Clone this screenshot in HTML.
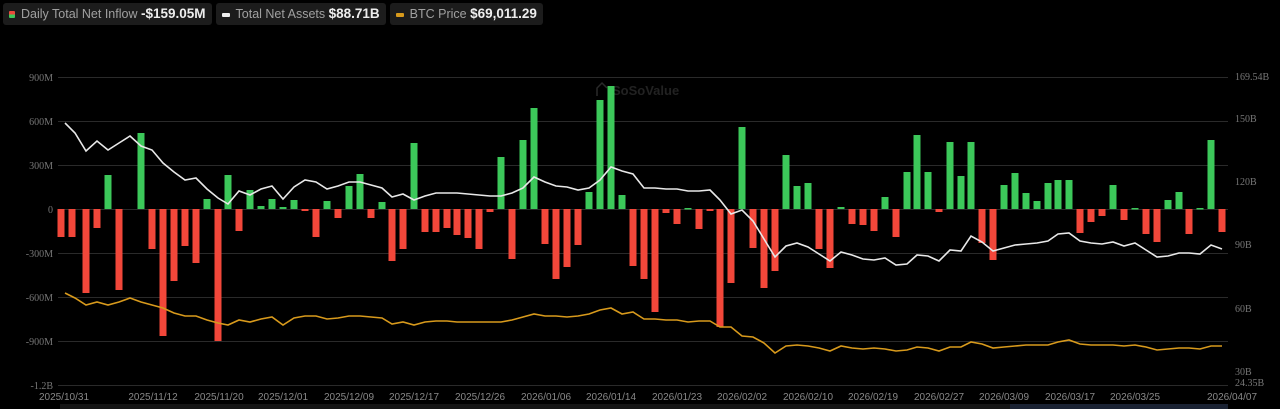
<!DOCTYPE html>
<html><head><meta charset="utf-8"><style>
html,body{margin:0;padding:0;background:#000;width:1280px;height:409px;overflow:hidden;font-family:"Liberation Sans",sans-serif}
#lg{position:absolute;top:3px;left:3px;display:flex;gap:4px;z-index:2}
.leg{height:22px;background:#1c1c1c;border-radius:3px;color:#a0a0a0;font-size:12.5px;line-height:22px;padding:0 6px;white-space:nowrap}
.leg b{color:#eee;font-size:13.5px}
.sw{display:inline-block;width:8px;height:4px;vertical-align:middle;margin-right:6px;border-radius:1px}
svg{position:absolute;left:0;top:0}
</style></head><body>
<div id="lg">
<div class="leg"><span class="sw" style="height:7px;width:6px;background:linear-gradient(#e94a3a 50%,#3cc85a 50%)"></span>Daily Total Net Inflow <b>-$159.05M</b></div>
<div class="leg"><span class="sw" style="background:#eee"></span>Total Net Assets <b>$88.71B</b></div>
<div class="leg"><span class="sw" style="background:#d89a1c"></span>BTC Price <b>$69,011.29</b></div>
</div>
<svg id="s" width="1280" height="409" xmlns="http://www.w3.org/2000/svg" font-family="Liberation Serif, serif" font-size="10" fill="#777">
<g stroke="#2a2a2a" stroke-width="1">
<line x1="58" x2="1228" y1="77.5" y2="77.5"/><line x1="58" x2="1228" y1="121.5" y2="121.5"/><line x1="58" x2="1228" y1="165.5" y2="165.5"/><line x1="58" x2="1228" y1="209.5" y2="209.5"/><line x1="58" x2="1228" y1="253.5" y2="253.5"/><line x1="58" x2="1228" y1="297.5" y2="297.5"/><line x1="58" x2="1228" y1="341.5" y2="341.5"/><line x1="58" x2="1228" y1="385.5" y2="385.5"/>
</g>
<g text-anchor="end"><text x="53" y="81">900M</text><text x="53" y="125">600M</text><text x="53" y="169">300M</text><text x="53" y="213">0</text><text x="53" y="257">-300M</text><text x="53" y="301">-600M</text><text x="53" y="345">-900M</text><text x="53" y="389">-1.2B</text></g>
<g><text x="1235" y="80">169.54B</text><text x="1235" y="122">150B</text><text x="1235" y="185">120B</text><text x="1235" y="248">90B</text><text x="1235" y="312">60B</text><text x="1235" y="375">30B</text><text x="1235" y="386">24.35B</text></g>
<g font-family="Liberation Sans, sans-serif" font-size="10" fill="#888" text-anchor="middle">
<text x="64" y="400">2025/10/31</text><text x="153" y="400">2025/11/12</text><text x="219" y="400">2025/11/20</text><text x="283" y="400">2025/12/01</text><text x="349" y="400">2025/12/09</text><text x="414" y="400">2025/12/17</text><text x="480" y="400">2025/12/26</text><text x="546" y="400">2026/01/06</text><text x="611" y="400">2026/01/14</text><text x="677" y="400">2026/01/23</text><text x="742" y="400">2026/02/02</text><text x="808" y="400">2026/02/10</text><text x="873" y="400">2026/02/19</text><text x="939" y="400">2026/02/27</text><text x="1004" y="400">2026/03/09</text><text x="1070" y="400">2026/03/17</text><text x="1135" y="400">2026/03/25</text><text x="1232" y="400">2026/04/07</text>
</g>
<rect x="60" y="404" width="1168" height="5" fill="#141414"/><rect x="1010" y="404" width="218" height="5" fill="#1a2233"/>
<g opacity="0.5"><path d="M597 96 v-8 l5 -5 l5 5" stroke="#555" fill="none" stroke-width="1.5"/><text x="612" y="95" font-family="Liberation Sans, sans-serif" font-size="13" font-weight="bold" fill="#444">SoSoValue</text></g>
<g id="bars"></g>
<polyline id="wl" fill="none" stroke="#e8e8e8" stroke-width="1.6"/>
<polyline id="ol" fill="none" stroke="#d89a1c" stroke-width="1.6"/>
</svg>
<script>
var B=[[61,237],[72,237],[86,293],[97,228],[108,175],[119,290],[141,133],[152,249],[163,336],[174,281],[185,246],[196,263],[207,199],[218,341],[228,175],[239,231],[250,190],[261,206],[272,199],[283,207],[294,200],[305,211],[316,237],[327,201],[338,218],[349,186],[360,174],[371,218],[382,202],[392,261],[403,249],[414,143],[425,232],[436,232],[447,228],[457,235],[468,238],[479,249],[490,212],[501,157],[512,259],[523,140],[534,108],[545,244],[556,279],[567,267],[578,245],[589,192],[600,100],[611,86],[622,195],[633,266],[644,279],[655,312],[666,213],[677,224],[688,208],[699,229],[710,211],[720,327],[731,283],[742,127],[753,248],[764,288],[775,271],[786,155],[797,186],[808,183],[819,249],[830,268],[841,207],[852,224],[863,225],[874,231],[885,197],[896,237],[907,172],[917,135],[928,172],[939,212],[950,142],[961,176],[971,142],[982,243],[993,260],[1004,185],[1015,173],[1026,193],[1037,201],[1048,183],[1058,180],[1069,180],[1080,233],[1091,222],[1102,216],[1113,185],[1124,220],[1135,208],[1146,234],[1157,242],[1168,200],[1179,192],[1189,234],[1200,208],[1211,140],[1222,232]];
var g=document.getElementById('bars'),h='';
B.forEach(function(b){var y0=209,y=b[1];var top=Math.min(y0,y),ht=Math.max(1.5,Math.abs(y-y0));h+='<rect x="'+(b[0]-3.5)+'" y="'+top+'" width="7" height="'+ht+'" fill="'+(y<y0?'#3cc85a':'#f2473a')+'"/>';});
g.innerHTML=h;
var W="65,123 75,133 86,151 97,141 108,150 119,143 130,136 141,146 152,150 163,163 174,172 185,180 196,178 207,189 218,198 228,204 239,191 250,195 261,189 272,186 283,199 294,187 305,180 316,182 327,189 338,186 349,182 360,182 371,185 382,188 392,197 403,194 414,200 425,196 436,193 447,193 457,193 468,194 479,195 490,196 501,196 512,193 523,188 534,177 545,182 556,186 567,187 578,190 589,188 600,180 611,167 622,171 633,174 644,188 655,188 666,189 677,189 688,191 699,191 710,190 720,200 731,214 742,210 753,221 764,239 775,257 786,246 797,243 808,247 819,254 830,261 841,252 852,255 863,259 874,260 885,258 896,265 907,264 917,255 928,256 939,261 950,250 961,251 971,236 982,242 993,251 1004,248 1015,245 1026,244 1037,243 1048,241 1058,234 1069,233 1080,241 1091,243 1102,244 1113,242 1124,246 1135,243 1146,250 1157,257 1168,256 1179,253 1189,253 1200,254 1211,245 1222,249";
var O="65,293 75,298 86,305 97,302 108,305 119,302 130,298 141,302 152,305 163,308 174,313 185,316 196,316 207,320 218,323 228,325 239,320 250,322 261,319 272,317 283,325 294,318 305,316 316,316 327,319 338,318 349,316 360,316 371,317 382,318 392,324 403,322 414,325 425,322 436,321 447,321 457,322 468,322 479,322 490,322 501,322 512,320 523,317 534,314 545,316 556,316 567,317 578,316 589,314 600,310 611,308 622,314 633,312 644,319 655,319 666,320 677,320 688,322 699,321 710,321 720,327 731,327 742,336 753,337 764,343 775,353 786,346 797,345 808,346 819,348 830,351 841,346 852,348 863,349 874,348 885,349 896,351 907,350 917,347 928,348 939,351 950,347 961,347 971,342 982,344 993,348 1004,347 1015,346 1026,345 1037,345 1048,345 1058,342 1069,340 1080,344 1091,345 1102,345 1113,345 1124,346 1135,345 1146,347 1157,350 1168,349 1179,348 1189,348 1200,349 1211,346 1222,346";
document.getElementById('wl').setAttribute('points',W);
document.getElementById('ol').setAttribute('points',O);
</script>
</body></html>
